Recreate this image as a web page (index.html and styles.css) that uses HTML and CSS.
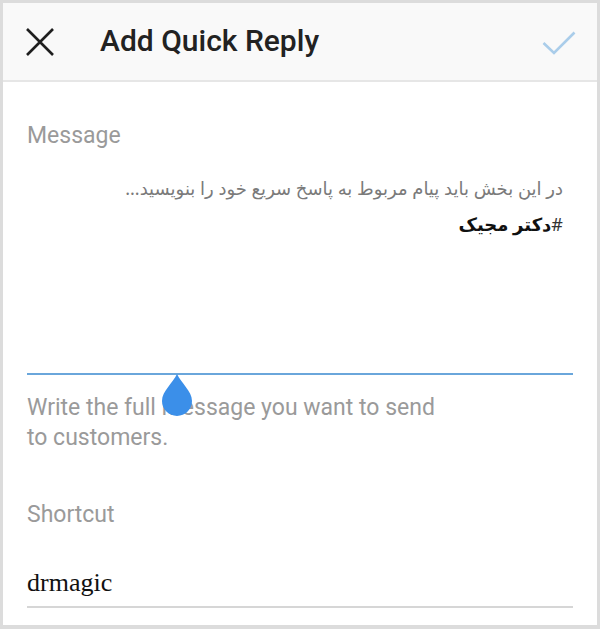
FILE: index.html
```html
<!DOCTYPE html>
<html lang="en">
<head>
  <meta charset="UTF-8" />
  <meta name="viewport" content="width=device-width, initial-scale=1.0" />
  <title>Add Quick Reply</title>
  <link rel="stylesheet" href="styles.css">
</head>
<body>
  <div class="frame">

    <!-- Top bar -->
    <div class="topbar">
      <svg class="close-icon" width="30" height="30" viewBox="0 0 30 30">
        <path d="M2 2 L28 28 M28 2 L2 28" stroke="#1f1f1f" stroke-width="2.6" fill="none" />
      </svg>
      <h1 class="title">Add Quick Reply</h1>
      <svg class="check-icon" width="34" height="24" viewBox="0 0 34 24">
        <path d="M1.5 12 L12 22 L32.5 1.5" stroke="#aacdea" stroke-width="2.6" fill="none" />
      </svg>
    </div>

    <div class="content">
      <div class="field-label">Message</div>
      <div class="message-box" dir="rtl">
        <p class="placeholder">در این بخش باید پیام مربوط به پاسخ سریع خود را بنویسید...</p>
        <p class="tag"><span class="hash">#</span>دکتر مجیک</p>
      </div>
      <div class="focus-line">
        <svg class="handle" width="30" height="42" viewBox="0 0 30 42">
          <path d="M15 0 C19 9 30 17 30 27 A15 15 0 0 1 0 27 C0 17 11 9 15 0 Z" fill="#3b8fe9" />
        </svg>
      </div>
      <p class="helper">Write the full message you want to send<br>to customers.</p>

      <div class="field-label shortcut-label">Shortcut</div>
      <div class="shortcut-value">drmagic</div>
    </div>
  </div>
</body>
</html>
```

FILE: styles.css
```css
body {
  margin: 0;
  font-family: Roboto, "Noto Sans", Arial, sans-serif;
  background: #fff;
}
.frame {
  width: 600px;
  height: 629px;
  box-sizing: border-box;
  border: 3px solid #dcdcdc;
  border-bottom-width: 4px;
  background: #fff;
  overflow: hidden;
}
/* Top bar */
.topbar {
  height: 77px;
  background: #f9f9f9;
  border-bottom: 2px solid #e6e6e6;
  display: flex;
  align-items: center;
  padding: 0 21px 0 22px;
}
.close-icon {
  margin-right: 45px;
}
.title {
  flex: 1;
  margin: 0;
  font-size: 30px;
  font-weight: 500;
  color: #222;
  padding-bottom: 2px;
}
.check-icon {
  margin-top: 2px;
}
/* Form */
.content {
  padding: 0 24px 0 24px;
}
.field-label {
  font-size: 23px;
  color: #9a9a9a;
  margin-top: 42px;
  line-height: 24px;
}
.message-box {
  height: 197px;
  padding-right: 10px;
  font-family: "Noto Sans", "DejaVu Sans", sans-serif;
}
.message-box p {
  margin: 0;
}
.placeholder {
  font-size: 18px;
  color: #7a7a7a;
  margin-top: 28px !important;
  line-height: 24px;
}
.tag {
  font-size: 18px;
  font-weight: bold;
  color: #111;
  margin-top: 12px !important;
  line-height: 24px;
}
.hash {
  font-weight: normal;
  color: #333;
}
.focus-line {
  position: relative;
  height: 2px;
  background: #6aa6db;
}
.handle {
  position: absolute;
  left: 135px;
  top: 1px;
}
.helper {
  margin: 18px 0 0;
  font-size: 23px;
  line-height: 30px;
  color: #9a9a9a;
}
.shortcut-label {
  margin-top: 50px;
}
.shortcut-value {
  margin-top: 41px;
  font-family: "Liberation Serif", serif;
  font-size: 26px;
  color: #111;
  line-height: 30px;
  padding-bottom: 8px;
  border-bottom: 2px solid #d6d6d6;
}
```
